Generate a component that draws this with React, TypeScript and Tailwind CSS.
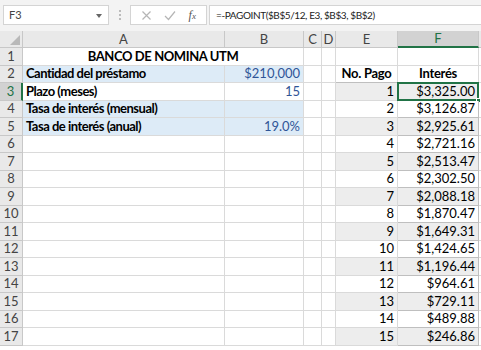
import React from "react";

const font = { fontFamily: "Lato, 'Open Sans', sans-serif" };

const interest = [
  "$3,325.00","$3,126.87","$2,925.61","$2,721.16","$2,513.47","$2,302.50","$2,088.18","$1,870.47","$1,649.31","$1,424.65","$1,196.44","$964.61","$729.11","$489.88","$246.86",
];

function Cell({ className = "", children }: { className?: string; children?: React.ReactNode }) {
  return (
    <div className={"h-[17.5px] border-r border-b border-[#dadada] flex items-center px-[3px] text-[13px] leading-none whitespace-nowrap overflow-visible " + className}>
      {children}
    </div>
  );
}

function RowHead({ n, active }: { n: number; active?: boolean }) {
  return (
    <div className={"h-[17.5px] border-r border-b border-[#c8c8c8] flex items-center justify-center text-[13px] leading-none " + (active ? "bg-[#d2d2d2] text-[#217346] border-r-2 border-r-[#217346]" : "bg-[#e9e9e9] text-[#444]")}>
      {n}
    </div>
  );
}

export default function App() {
  const rows: React.ReactNode[] = [];
  for (let r = 1; r <= 17; r++) {
    const blue = r === 2 || r === 4 || r === 5;
    const bgAB = blue ? "bg-[#ddebf7]" : "bg-white";
    let a: React.ReactNode = null;
    let b: React.ReactNode = null;
    if (r === 2) { a = "Cantidad del préstamo"; b = "$210,000"; }
    if (r === 3) { a = "Plazo (meses)"; b = "15"; }
    if (r === 4) { a = "Tasa de interés (mensual)"; }
    if (r === 5) { a = "Tasa de interés (anual)"; b = "19.0%"; }
    const pay = r >= 3 ? r - 2 : 0;
    const tbg = pay % 2 === 1 ? "bg-[#ededed]" : "bg-white";
    rows.push(
      <React.Fragment key={r}>
        <RowHead n={r} active={r === 3} />
        {r === 1 ? (
          <div className="col-span-2 h-[17.5px] border-r border-b border-[#dadada] flex items-center justify-center text-[13px] font-bold tracking-[-0.4px] text-black leading-none">
            BANCO DE NOMINA UTM
          </div>
        ) : (
          <>
            <Cell className={bgAB + " font-bold tracking-[-0.5px] text-black"}>{a}</Cell>
            <Cell className={bgAB + " justify-end text-[#2f5597]"}>{b}</Cell>
          </>
        )}
        <Cell />
        <Cell />
        {r === 1 ? (
          <>
            <Cell />
            <Cell />
          </>
        ) : r === 2 ? (
          <>
            <Cell className="justify-center font-bold tracking-[-0.3px] text-black border-b-[#bfbfbf]">No. Pago</Cell>
            <Cell className="justify-center font-bold tracking-[-0.3px] text-black border-b-[#bfbfbf]">Interés</Cell>
          </>
        ) : (
          <>
            <Cell className={tbg + " justify-end text-black border-[#bfbfbf]"}>{pay}</Cell>
            <div className={"relative h-[17.5px] border-r border-b border-[#bfbfbf] flex items-center justify-end px-[3px] text-[13px] leading-none text-black " + tbg}>
              {interest[pay - 1]}
              {r === 3 && (
                <>
                  <div className="absolute -left-[1px] -top-[1px] -right-[1px] -bottom-[1px] border-2 border-[#217346] pointer-events-none" />
                  <div className="absolute -right-[3px] -bottom-[3px] w-[5px] h-[5px] bg-[#217346] border border-white" />
                </>
              )}
            </div>
          </>
        )}
        <div className="h-[17.5px] border-b border-[#dadada] bg-white" />
      </React.Fragment>
    );
  }

  return (
    <div className="w-[481px] h-[350px] overflow-hidden bg-white" style={font}>
      {/* formula bar */}
      <div className="h-[31px] bg-[#f3f3f3] flex items-start pt-[5px] pl-[3px] gap-0">
        <div className="w-[106px] h-[20px] bg-white border border-[#d4d4d4] flex items-center pl-[5px] text-[11px] text-[#444] relative">
          F3
          <span className="absolute right-[6px] top-[8px] w-0 h-0 border-l-[3px] border-r-[3px] border-t-[4px] border-l-transparent border-r-transparent border-t-[#666]" />
        </div>
        <div className="w-[21px] h-[20px] flex flex-col items-center justify-center gap-[2px]">
          <span className="w-[2px] h-[2px] bg-[#bbb]" />
          <span className="w-[2px] h-[2px] bg-[#bbb]" />
          <span className="w-[2px] h-[2px] bg-[#bbb]" />
        </div>
        <div className="w-[77px] h-[20px] bg-white border border-[#d4d4d4] flex items-center justify-around px-[4px]">
          <svg width="11" height="11" viewBox="0 0 11 11"><path d="M1.5 1.5 L9.5 9.5 M9.5 1.5 L1.5 9.5" stroke="#b5b5b5" strokeWidth="1.2" fill="none" /></svg>
          <svg width="12" height="11" viewBox="0 0 12 11"><path d="M1 6 L4.5 9.5 L11 1.5" stroke="#b5b5b5" strokeWidth="1.2" fill="none" /></svg>
          <span className="text-[12px] italic text-[#555]" style={{ fontFamily: "'Liberation Serif', serif" }}>f<span className="text-[9px]">x</span></span>
        </div>
        <div className="ml-[2px] flex-1 h-[20px] bg-white border border-[#d4d4d4] border-r-0 flex items-center pl-[6px] text-[10px] tracking-[-0.4px] text-[#222]">
          =-PAGOINT($B$5/12, E3, $B$3, $B$2)
        </div>
      </div>
      {/* grid */}
      <div className="grid grid-cols-[23px_202px_79px_18px_14px_62px_81px_1fr]">
        <div className="h-[17px] bg-[#e9e9e9] border-r border-b border-[#c8c8c8] relative">
          <span className="absolute right-[2px] bottom-[2px] w-0 h-0" style={{ borderBottom: "10px solid #b9b9b9", borderLeft: "10px solid transparent" }} />
        </div>
        {["A", "B", "C", "D", "E"].map((c) => (
          <div key={c} className="h-[17px] bg-[#e9e9e9] border-r border-b border-[#c8c8c8] flex items-center justify-center text-[13px] text-[#444] leading-none">
            {c}
          </div>
        ))}
        <div className="h-[17px] bg-[#d2d2d2] border-r border-[#c8c8c8] border-b-2 border-b-[#217346] flex items-center justify-center text-[13px] text-[#217346] leading-none">
          F
        </div>
        <div className="h-[17px] bg-[#e9e9e9] border-b border-[#c8c8c8]" />
        {rows}
      </div>
    </div>
  );
}
